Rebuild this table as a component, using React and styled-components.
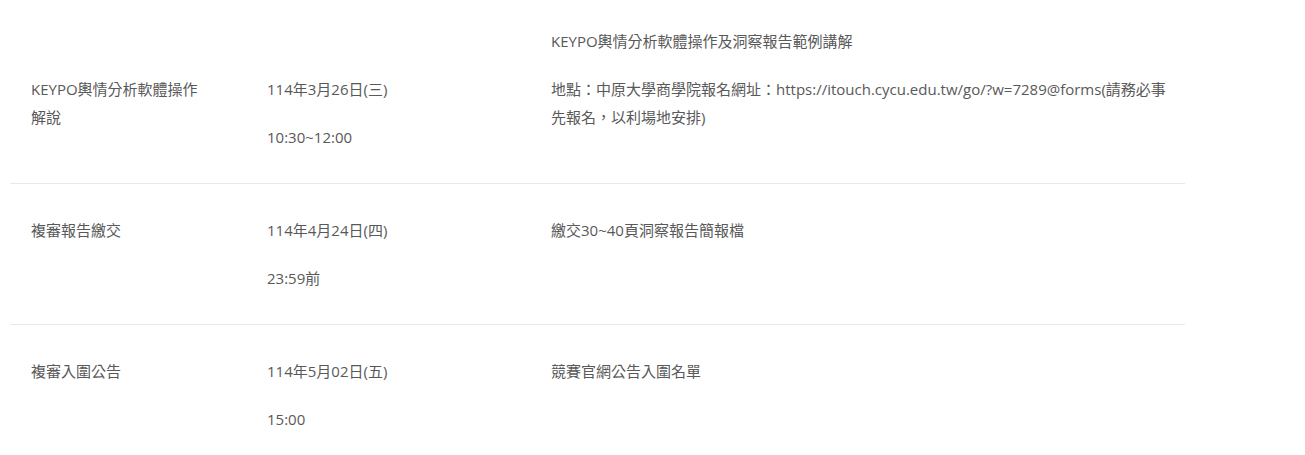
import React from "react";
import styled, { createGlobalStyle } from "styled-components";

const Global = createGlobalStyle`
  html, body { margin: 0; padding: 0; background: #fff; }
  body {
    font-family: "Open Sans", "Noto Sans CJK TC", sans-serif;
    font-size: 15px;
    color: #595959;
  }
`;

const Page = styled.div`
  padding: 0 120px 0 10px;
`;

const Table = styled.table`
  width: 1175px;
  border-collapse: collapse;
  table-layout: fixed;
`;

const Row = styled.tr`
  border-bottom: 1px solid #e9e9e9;
`;

const Cell = styled.td`
  vertical-align: top;
  padding: ${(p) => (p.$first ? "27px" : "32px")} ${(p) => p.$right || 21}px 32px 21px;
`;

const Label = styled.div`
  max-width: 172px;
`;

const Para = styled.p`
  margin: 0 0 20px;
  line-height: 28px;
  min-height: 28px;
  &:last-child { margin-bottom: 0; }
`;

const rows = [
  {
    title: ["", "KEYPO輿情分析軟體操作解說"],
    date: ["", "114年3月26日(三)", "10:30~12:00"],
    desc: [
      "KEYPO輿情分析軟體操作及洞察報告範例講解",
      "地點：中原大學商學院報名網址：https://itouch.cycu.edu.tw/go/?w=7289@forms(請務必事先報名，以利場地安排)",
    ],
  },
  {
    title: ["複審報告繳交"],
    date: ["114年4月24日(四)", "23:59前"],
    desc: ["繳交30~40頁洞察報告簡報檔"],
  },
  {
    title: ["複審入圍公告"],
    date: ["114年5月02日(五)", "15:00"],
    desc: ["競賽官網公告入圍名單"],
  },
];

export default function App() {
  return (
    <>
      <Global />
      <Page>
        <Table>
          <colgroup>
            <col style={{ width: 236 }} />
            <col style={{ width: 284 }} />
            <col />
          </colgroup>
          <tbody>
            {rows.map((r, i) => (
              <Row key={i}>
                <Cell $first={i === 0}>
                  <Label>
                    {r.title.map((t, j) => (
                      <Para key={j}>{t}</Para>
                    ))}
                  </Label>
                </Cell>
                <Cell $first={i === 0}>
                  {r.date.map((t, j) => (
                    <Para key={j}>{t}</Para>
                  ))}
                </Cell>
                <Cell $first={i === 0} $right={14}>
                  {r.desc.map((t, j) => (
                    <Para key={j}>{t}</Para>
                  ))}
                </Cell>
              </Row>
            ))}
          </tbody>
        </Table>
      </Page>
    </>
  );
}
